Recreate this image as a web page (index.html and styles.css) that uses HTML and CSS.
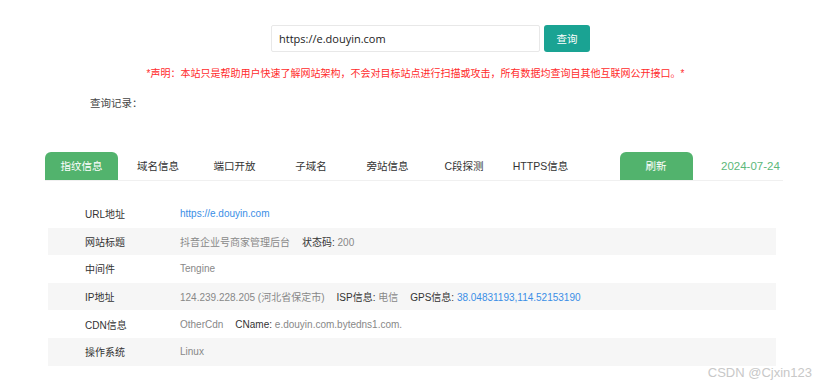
FILE: index.html
```html
<!DOCTYPE html>
<html lang="zh-CN">
<head>
    <meta charset="UTF-8">
    <title>指纹信息查询</title>
    <link rel="stylesheet" href="styles.css">
</head>
<body>
    <div class="search">
        <input class="search-input" type="text" value="https://e.douyin.com">
        <button class="search-btn">查询</button>
    </div>

    <p class="notice">*声明：本站只是帮助用户快速了解网站架构，不会对目标站点进行扫描或攻击，所有数据均查询自其他互联网公开接口。*</p>

    <div class="history">查询记录：</div>

    <div class="tabs">
        <div class="tab active">指纹信息</div>
        <div class="tab">域名信息</div>
        <div class="tab">端口开放</div>
        <div class="tab">子域名</div>
        <div class="tab">旁站信息</div>
        <div class="tab">C段探测</div>
        <div class="tab">HTTPS信息</div>
        <div class="refresh">刷新</div>
        <div class="date">2024-07-24</div>
    </div>

    <div class="info">
        <div class="row">
            <span class="label">URL地址</span>
            <span class="value"><span class="link">https://e.douyin.com</span></span>
        </div>
        <div class="row alt">
            <span class="label">网站标题</span>
            <span class="value">抖音企业号商家管理后台<b>状态码:</b> 200</span>
        </div>
        <div class="row">
            <span class="label">中间件</span>
            <span class="value">Tengine</span>
        </div>
        <div class="row alt">
            <span class="label">IP地址</span>
            <span class="value">124.239.228.205 (河北省保定市)<b>ISP信息:</b> 电信<b>GPS信息:</b> <span class="link">38.04831193,114.52153190</span></span>
        </div>
        <div class="row">
            <span class="label">CDN信息</span>
            <span class="value">OtherCdn<b>CName:</b> e.douyin.com.bytedns1.com.</span>
        </div>
        <div class="row alt">
            <span class="label">操作系统</span>
            <span class="value">Linux</span>
        </div>
    </div>

    <div class="watermark">CSDN @Cjxin123</div>
</body>
</html>
```

FILE: styles.css
```css
body {
    margin: 0;
    font-family: "Liberation Sans", "Noto Sans CJK SC", sans-serif;
    color: #333;
    background-color: #fff;
    width: 831px;
    height: 390px;
    overflow: hidden;
    position: relative;
}

/* 搜索栏 */
.search {
    display: flex;
    gap: 4px;
    padding: 25px 0 0 271px;
}
.search-input {
    width: 269px;
    height: 27px;
    box-sizing: border-box;
    border: 1px solid #e8e8e8;
    border-radius: 2px;
    padding: 0 7px;
    font-family: "Open Sans", "Noto Sans CJK SC", sans-serif;
    font-size: 11px;
    color: #222;
    outline: none;
}
.search-btn {
    width: 46px;
    height: 27px;
    border: none;
    border-radius: 3px;
    background-color: #1aa393;
    color: #fff;
    font-family: "Noto Sans CJK SC", sans-serif;
    font-size: 10.5px;
    padding: 0;
}

.notice {
    margin: 15px 0 0;
    text-align: center;
    color: #ff2b2b;
    font-size: 10px;
    line-height: 14px;
}

.history {
    margin: 15px 0 0 90px;
    font-size: 10.5px;
    line-height: 14px;
    color: #444;
}

/* 标签栏 */
.tabs {
    display: flex;
    align-items: center;
    gap: 3.5px;
    margin: 42px 0 0 45px;
    width: 738px;
    height: 28px;
    border-bottom: 1px solid #f0f0f0;
    font-size: 10.5px;
}
.tab {
    width: 73px;
    height: 28px;
    line-height: 28px;
    text-align: center;
    color: #333;
}
.tab.active {
    background-color: #52b36d;
    color: #fff;
    border-radius: 6px 6px 0 0;
}
.refresh {
    width: 73px;
    height: 28px;
    line-height: 28px;
    margin-left: 39px;
    text-align: center;
    background-color: #52b36d;
    color: #fff;
    border-radius: 6px 6px 0 0;
}
.date {
    margin-left: 25px;
    color: #5cb87a;
    font-size: 11.5px;
}

/* 信息表 */
.info {
    margin: 19px 0 0 48px;
    width: 728px;
}
.row {
    display: flex;
    align-items: center;
    height: 27.6px;
    font-size: 10px;
}
.row.alt {
    background-color: #f6f6f6;
}
.label {
    width: 95px;
    padding-left: 37px;
    color: #333;
}
.value {
    color: #888;
}
.value b {
    font-weight: normal;
    color: #333;
    margin-left: 12px;
}
.link {
    color: #3a8ee6;
}

.watermark {
    position: absolute;
    right: 19px;
    bottom: 10px;
    font-size: 13px;
    color: #c8c8c8;
}
```
